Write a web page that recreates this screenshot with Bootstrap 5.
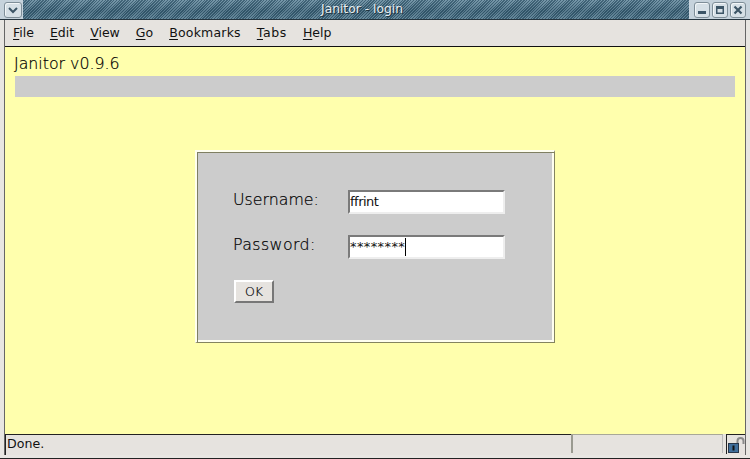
<!DOCTYPE html>
<html lang="en">
<head>
<meta charset="utf-8">
<title>Janitor - login</title>
<link href="https://cdn.jsdelivr.net/npm/bootstrap@5.3.0/dist/css/bootstrap.min.css" rel="stylesheet">
<style>
html,body{margin:0;padding:0;width:750px;height:459px;overflow:hidden;background:#e6e3df;}
body{font-family:"DejaVu Sans",sans-serif;color:#111;}
.frame{width:750px;height:459px;background:#e8e6e2;border-bottom:1px solid #222;}
.titlebar{height:20px;background-color:#c6d3dc;border-bottom:1px solid #24343e;}
.hatch{background-color:#4f7488;background-image:repeating-linear-gradient(135deg,rgba(40,75,95,.6) 0 1px,rgba(140,170,185,.35) 1px 2px),linear-gradient(#6b8da0,#3d6176 60%,#557a8e);}
.titletext{font-size:12.3px;color:#e6edf1;line-height:18px;padding-left:12px;text-shadow:1px 1px 0 #203440;}
.wbtn-wrap{background:#c6d3dc;padding:0 4px 0 5px;gap:2px;}
.wbtn-l{background:#c6d3dc;padding:0 1px 0 4px;}
.wbtn{width:16px;height:16px;border:1px solid #7e8e98;border-radius:3px;background:#d6e0e6;box-shadow:inset 1px 1px 0 #f2f6f8;}
.wbtn-wide{width:18px;}
.inner{margin:0 4px;border-left:1px solid #666;border-right:1px solid #666;}
.menubar{height:27px;background:#e6e3df;border-bottom:1px solid #111;padding:1px 0 0 8px;gap:16px;font-size:12.5px;}
.menubar u{text-underline-offset:2px;}
.sp-b{letter-spacing:.2px;}
.sp-t{letter-spacing:.6px;}
.pagearea{height:387px;background:#ffffad;padding:0 10px;}
.apptitle{font-size:15.8px;line-height:20px;height:20px;padding-top:7px;margin:0 0 0 -1px;box-sizing:content-box;color:#000;font-weight:200;-webkit-text-stroke:.2px #000;}
.greybar{height:21px;background:#cccccc;margin-top:2px;}
.loginbox{width:360px;height:193px;margin:53px auto 0;background:#cccccc;border-style:solid;border-width:2px 1px 1px 2px;border-color:#fffff0 #84845f #84845f #fffff0;box-shadow:inset 1px 1px 0 #7f7f62,inset -2px -2px 0 #fffff0;padding:38px 0 0 37px;box-sizing:border-box;}
.lbl{width:115px;margin-left:-1px;margin-top:-4px;font-size:15.8px;color:#000;font-weight:200;-webkit-text-stroke:.2px #000;}
.lbl-pw{letter-spacing:.4px;}
.fieldrow{height:24px;margin-bottom:21px;}
.entry{width:157px;height:24px;background:#fff;border:2px solid;border-color:#7a7a7a #eee #eee #7a7a7a;font-size:13px;line-height:20px;padding:0;color:#111;}
.nm{letter-spacing:-.5px;}
.pw{letter-spacing:.4px;}
.caret{display:inline-block;width:1px;height:18px;background:#000;vertical-align:-5px;}
.okbtn{width:40px;height:23px;background:#e6e3df;border:2px solid;border-color:#fff #777 #777 #fff;font-size:12.5px;line-height:19px;padding:0;text-align:center;color:#000;font-weight:200;-webkit-text-stroke:.2px #000;}
.statusbar{height:21px;background:#e6e3df;font-size:12.6px;}
.st-main{width:566px;padding-left:1px;line-height:17px;border-top:1px solid #222;border-left:1px solid #222;}
.st-mid{width:152px;border-top:1px solid #a8a898;border-left:2px solid #9a9a90;border-right:1px solid #bbb;height:19px;}
.st-lock{width:19px;border-left:1px solid #222;border-top:1px solid #222;height:20px;margin-left:3px;}
</style>
</head>
<body>
<div class="frame d-flex flex-column">
  <div class="titlebar d-flex align-items-stretch">
    <div class="wbtn-l d-flex align-items-center">
      <div class="wbtn wbtn-wide d-flex align-items-center justify-content-center">
        <svg width="10" height="8" viewBox="0 0 10 8"><path d="M1 2l4 4 4-4" fill="none" stroke="#3c5566" stroke-width="2"/></svg>
      </div>
    </div>
    <div class="hatch titletext flex-grow-1 text-center">Janitor - login</div>
    <div class="wbtn-wrap d-flex align-items-center">
      <div class="wbtn d-flex align-items-center justify-content-center">
        <svg width="10" height="10" viewBox="0 0 10 10"><rect x="1" y="6" width="8" height="3" fill="#3c5566"/></svg>
      </div>
      <div class="wbtn d-flex align-items-center justify-content-center">
        <svg width="10" height="10" viewBox="0 0 10 10"><path d="M1 1h8v8h-8z M2.500 4v3.500h5v-3.500z" fill="#3c5566" fill-rule="evenodd"/></svg>
      </div>
      <div class="wbtn d-flex align-items-center justify-content-center">
        <svg width="10" height="10" viewBox="0 0 10 10"><path d="M1.500 1.500l7 7M8.500 1.500l-7 7" stroke="#3c5566" stroke-width="2.200"/></svg>
      </div>
    </div>
  </div>
  <div class="inner">
    <nav class="menubar d-flex align-items-center">
      <span><u>F</u>ile</span><span><u>E</u>dit</span><span><u>V</u>iew</span><span><u>G</u>o</span><span class="sp-b"><u>B</u>ookmarks</span><span class="sp-t"><u>T</u>abs</span><span><u>H</u>elp</span>
    </nav>
    <main class="pagearea">
      <h1 class="apptitle">Janitor v0.9.6</h1>
      <div class="greybar"></div>
      <form class="loginbox">
        <div class="fieldrow d-flex align-items-center">
          <label class="lbl">Username:</label>
          <div class="entry"><span class="nm">ffrint</span></div>
        </div>
        <div class="fieldrow d-flex align-items-center">
          <label class="lbl lbl-pw">Password:</label>
          <div class="entry"><span class="pw">********</span><span class="caret"></span></div>
        </div>
        <div class="okbtn">OK</div>
      </form>
    </main>
    <footer class="statusbar d-flex">
      <div class="st-main">Done.</div>
      <div class="st-mid"></div>
      <div class="st-lock d-flex align-items-center justify-content-center">
        <svg width="18" height="18" viewBox="0 0 18 18"><path d="M10.500 9V5a3 3 0 0 1 6 0v3" fill="none" stroke="#8a8a8a" stroke-width="2"/><rect x="1.500" y="7.500" width="10" height="9" fill="#3f6f9c" stroke="#26364a"/><rect x="5.500" y="9.500" width="2" height="5" fill="#111"/></svg>
      </div>
    </footer>
  </div>
</div>
<script src="https://cdn.jsdelivr.net/npm/bootstrap@5.3.0/dist/js/bootstrap.bundle.min.js"></script>
</body>
</html>
